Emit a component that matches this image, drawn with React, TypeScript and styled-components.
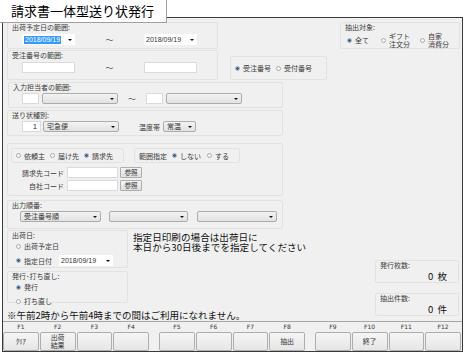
import React from 'react';
import styled, { createGlobalStyle } from 'styled-components';

const GlobalStyle = createGlobalStyle`
  html, body { margin: 0; padding: 0; background: #fff; }
  body { font-family: "Noto Sans CJK JP", "Liberation Sans", sans-serif; color: #333; }
  * { box-sizing: border-box; }
`;

const Screen = styled.div`
  width: 465px;
  height: 354px;
  display: flex;
  flex-direction: column;
  overflow: hidden;
`;

const TitleTab = styled.div`
  position: relative;
  z-index: 1;
  width: 167px;
  height: 23px;
  background: #fff;
  border-right: 1px solid #a0a0a0;
  border-bottom: 1px solid #a0a0a0;
  font-size: 13px;
  line-height: 21px;
  padding-left: 11px;
  color: #000;
`;

const Frame = styled.div`
  margin: -6px 0 0 2px;
  width: 461px;
  height: 335px;
  border: 1px solid #3a3a3a;
  background: #f0f0f0;
  display: flex;
  flex-direction: column;
`;

const Main = styled.div`
  flex: 1;
  display: flex;
  flex-direction: column;
  padding: 4px 0 0 4px;
`;

const Row = styled.div<{ $top?: number }>`
  display: flex;
  align-items: flex-start;
  margin-top: ${p => p.$top ?? 0}px;
`;

const Group = styled.div<{ $w: number; $h: number; $ml?: number; $mt?: number }>`
  width: ${p => p.$w}px;
  height: ${p => p.$h}px;
  margin-left: ${p => p.$ml ?? 0}px;
  margin-top: ${p => p.$mt ?? 0}px;
  border: 1px solid #e2e2e2;
  border-radius: 2px;
  display: flex;
  flex-direction: column;
  flex-shrink: 0;
`;

const Caption = styled.div`
  font-size: 7px;
  line-height: 8px;
  padding-left: 4px;
  color: #3a3a3a;
  white-space: nowrap;
`;

const Fields = styled.div<{ $top?: number; $left?: number }>`
  display: flex;
  align-items: center;
  margin-top: ${p => p.$top ?? 0}px;
  padding-left: ${p => p.$left ?? 0}px;
`;

const Tilde = styled.div<{ $w: number }>`
  width: ${p => p.$w}px;
  text-align: center;
  font-size: 8px;
  color: #555;
`;

const TextBox = styled.div<{ $w: number; $ml?: number; $align?: string }>`
  width: ${p => p.$w}px;
  height: 11px;
  margin-left: ${p => p.$ml ?? 0}px;
  background: #fff;
  border: 1px solid #dadada;
  font-family: "Liberation Sans", sans-serif;
  font-size: 7px;
  line-height: 9px;
  text-align: ${p => p.$align ?? 'left'};
  padding: 0 3px;
  color: #222;
  flex-shrink: 0;
`;

const Arrow = styled.span`
  width: 0;
  height: 0;
  border-left: 2px solid transparent;
  border-right: 2px solid transparent;
  border-top: 2px solid #111;
  margin-left: auto;
  flex-shrink: 0;
`;

const DateCombo = styled.div<{ $w: number; $ml?: number }>`
  width: ${p => p.$w}px;
  height: 11px;
  margin-left: ${p => p.$ml ?? 0}px;
  background: #fff;
  display: flex;
  align-items: center;
  padding: 0 3px 0 2px;
  font-family: "Liberation Sans", sans-serif;
  font-size: 7px;
  color: #333;
  flex-shrink: 0;
`;

const Selected = styled.span`
  background: #3399ff;
  color: #fff;
  padding: 0 1px;
  line-height: 8px;
`;

const Combo = styled.div<{ $w: number; $ml?: number }>`
  width: ${p => p.$w}px;
  height: 11px;
  margin-left: ${p => p.$ml ?? 0}px;
  border: 1px solid #acacac;
  border-radius: 2px;
  background: linear-gradient(#f3f3f3, #e2e2e2);
  display: flex;
  align-items: center;
  padding: 0 3px 0 3px;
  font-size: 7px;
  line-height: 9px;
  color: #333;
  flex-shrink: 0;
`;

const RefButton = styled.div`
  width: 22px;
  height: 11px;
  margin-left: 2px;
  border: 1px solid #adadad;
  border-radius: 1px;
  background: linear-gradient(#f4f4f4, #e0e0e0);
  font-size: 6.5px;
  line-height: 9px;
  text-align: center;
  color: #333;
`;

const FieldLabel = styled.div<{ $w?: number; $ml?: number }>`
  width: ${p => (p.$w ? `${p.$w}px` : 'auto')};
  margin-left: ${p => p.$ml ?? 0}px;
  text-align: right;
  font-size: 7px;
  line-height: 8px;
  color: #3a3a3a;
  white-space: nowrap;
  flex-shrink: 0;
`;

const RadioItem = styled.div<{ $ml?: number }>`
  display: flex;
  align-items: center;
  margin-left: ${p => p.$ml ?? 0}px;
  font-size: 7px;
  line-height: 8px;
  color: #3a3a3a;
  white-space: nowrap;
`;

const RadioText = styled.span`
  display: flex;
  flex-direction: column;
`;

const Dot = styled.span<{ $on?: boolean }>`
  width: 5px;
  height: 5px;
  border-radius: 50%;
  border: 1px solid #a9a9a9;
  margin-right: 3px;
  flex-shrink: 0;
  background: ${p =>
    p.$on ? 'radial-gradient(circle, #2461b3 0 1.2px, #bcd6f0 1.6px)' : '#fbfbfb'};
`;

const Radio = ({ on, lines, ml }: { on?: boolean; lines: string[]; ml?: number }) => (
  <RadioItem $ml={ml}>
    <Dot $on={on} />
    <RadioText>
      {lines.map(l => (
        <span key={l}>{l}</span>
      ))}
    </RadioText>
  </RadioItem>
);

const InnerBox = styled.div<{ $w: number; $h?: number; $ml?: number; $mt?: number }>`
  width: ${p => p.$w}px;
  height: ${p => p.$h ?? 15}px;
  margin-left: ${p => p.$ml ?? 0}px;
  margin-top: ${p => p.$mt ?? 0}px;
  border: 1px solid #e2e2e2;
  border-radius: 2px;
  display: flex;
  align-items: center;
  padding-left: 4px;
  flex-shrink: 0;
`;

const Bottom = styled.div`
  display: flex;
  margin-top: 1px;
`;

const LeftColumn = styled.div`
  display: flex;
  flex-direction: column;
`;

const Notice = styled.div`
  margin: 3px 0 0 5px;
  font-size: 9.6px;
  line-height: 9.8px;
  color: #111;
  white-space: nowrap;
`;

const WarnLine = styled.div`
  margin: 7px 0 0 0;
  font-size: 9.5px;
  line-height: 10px;
  color: #111;
  white-space: nowrap;
`;

const CountColumn = styled.div`
  display: flex;
  flex-direction: column;
  margin-left: auto;
  margin-right: 3px;
  padding-top: 30px;
`;

const CountBox = styled.div<{ $top?: number }>`
  width: 84px;
  height: 23px;
  margin-top: ${p => p.$top ?? 0}px;
  border: 1px solid #e2e2e2;
  border-radius: 2px;
  display: flex;
  flex-direction: column;
`;

const CountValue = styled.div`
  text-align: right;
  padding-right: 11px;
  font-size: 9.5px;
  line-height: 11px;
  color: #111;
  margin-top: 2px;
  word-spacing: 2px;
`;

const KeyBar = styled.div`
  height: 30px;
  border-top: 1px solid #a6a6a6;
  display: flex;
  gap: 10px;
  padding-top: 1px;
`;

const KeyGroup = styled.div`
  width: 146px;
  display: flex;
  gap: 1px;
`;

const KeyCell = styled.div`
  flex: 1;
  display: flex;
  flex-direction: column;
  align-items: stretch;
`;

const KeyName = styled.div`
  height: 9px;
  text-align: center;
  font-family: "DejaVu Sans", sans-serif;
  font-size: 6px;
  line-height: 8px;
  color: #333;
`;

const KeyButton = styled.div`
  height: 19px;
  border: 1px solid #adadad;
  border-radius: 2px;
  background: linear-gradient(#f5f5f5, #e6e6e6);
  display: flex;
  flex-direction: column;
  align-items: center;
  justify-content: center;
  font-size: 7px;
  line-height: 7.5px;
  color: #333;
`;

const keys: string[][] = [
  ['ｸﾘｱ', '出荷\n結果', '', ''],
  ['', '', '', '抽出'],
  ['', '終了', '', ''],
];

const App = (): React.ReactElement => {
  return (
    <Screen>
      <GlobalStyle />
      <TitleTab>請求書一体型送り状発行</TitleTab>
      <Frame>
        <Main>
          <Row>
            <Group $w={211} $h={27}>
              <Caption>出荷予定日の範囲:</Caption>
              <Fields $top={3} $left={14}>
                <DateCombo $w={53}>
                  <Selected>2018/09/19</Selected>
                  <Arrow />
                </DateCombo>
                <Tilde $w={69}>～</Tilde>
                <DateCombo $w={53}>
                  <span>2018/09/19</span>
                  <Arrow />
                </DateCombo>
              </Fields>
            </Group>
            <Group $w={120} $h={27} $ml={122}>
              <Caption>抽出対象:</Caption>
              <Fields $top={1} $left={6}>
                <Radio on lines={['全て']} />
                <Radio ml={12} lines={['ギフト', '注文分']} />
                <Radio ml={10} lines={['自家', '消費分']} />
              </Fields>
            </Group>
          </Row>

          <Row $top={1}>
            <Group $w={211} $h={30}>
              <Caption>受注番号の範囲:</Caption>
              <Fields $top={3} $left={14}>
                <TextBox $w={53} />
                <Tilde $w={69}>～</Tilde>
                <TextBox $w={53} />
              </Fields>
            </Group>
            <InnerBox $w={97} $h={24} $ml={12} $mt={6}>
              <Radio on lines={['受注番号']} />
              <Radio ml={5} lines={['受付番号']} />
            </InnerBox>
          </Row>

          <Row $top={2}>
            <Group $w={275} $h={26} $ml={1}>
              <Caption>入力担当者の範囲:</Caption>
              <Fields $top={2} $left={13}>
                <TextBox $w={17} />
                <Combo $w={76} $ml={3}>
                  <Arrow />
                </Combo>
                <Tilde $w={28}>～</Tilde>
                <TextBox $w={17} />
                <Combo $w={76} $ml={3}>
                  <Arrow />
                </Combo>
              </Fields>
            </Group>
          </Row>

          <Row $top={2}>
            <Group $w={276} $h={26}>
              <Caption>送り状種別:</Caption>
              <Fields $top={2} $left={14}>
                <TextBox $w={19} $align="right">1</TextBox>
                <Combo $w={76} $ml={2}>
                  <span>宅急便</span>
                  <Arrow />
                </Combo>
                <FieldLabel $ml={20}>温度帯</FieldLabel>
                <Combo $w={33} $ml={3}>
                  <span>常温</span>
                  <Arrow />
                </Combo>
              </Fields>
            </Group>
          </Row>

          <Row $top={7}>
            <Group $w={276} $h={53}>
              <Fields $top={4} $left={3}>
                <InnerBox $w={113}>
                  <Radio lines={['依頼主']} />
                  <Radio ml={5} lines={['届け先']} />
                  <Radio ml={5} on lines={['請求先']} />
                </InnerBox>
                <InnerBox $w={106} $ml={10}>
                  <FieldLabel>範囲指定</FieldLabel>
                  <Radio ml={5} on lines={['しない']} />
                  <Radio ml={6} lines={['する']} />
                </InnerBox>
              </Fields>
              <Fields $top={4}>
                <FieldLabel $w={56}>請求先コード</FieldLabel>
                <TextBox $w={51} $ml={3} />
                <RefButton>参照</RefButton>
              </Fields>
              <Fields $top={2}>
                <FieldLabel $w={56}>自社コード</FieldLabel>
                <TextBox $w={51} $ml={3} />
                <RefButton>参照</RefButton>
              </Fields>
            </Group>
          </Row>

          <Row $top={4}>
            <Group $w={276} $h={29}>
              <Caption>出力順番:</Caption>
              <Fields $top={2} $left={12}>
                <Combo $w={81}>
                  <span>受注番号順</span>
                  <Arrow />
                </Combo>
                <Combo $w={79} $ml={8}>
                  <Arrow />
                </Combo>
                <Combo $w={80} $ml={9}>
                  <Arrow />
                </Combo>
              </Fields>
            </Group>
          </Row>

          <Bottom>
            <LeftColumn>
              <Row>
                <LeftColumn>
                  <Group $w={121} $h={38}>
                    <Caption>出荷日:</Caption>
                    <Fields $top={3} $left={8}>
                      <Radio lines={['出荷予定日']} />
                    </Fields>
                    <Fields $top={5} $left={8}>
                      <Radio on lines={['指定日付']} />
                      <DateCombo $w={54} $ml={7}>
                        <span>2018/09/19</span>
                        <Arrow />
                      </DateCombo>
                    </Fields>
                  </Group>
                  <Group $w={121} $h={32} $mt={3}>
                    <Caption>発行･打ち直し:</Caption>
                    <Fields $top={3} $left={8}>
                      <Radio on lines={['発行']} />
                    </Fields>
                    <Fields $top={6} $left={8}>
                      <Radio lines={['打ち直し']} />
                    </Fields>
                  </Group>
                </LeftColumn>
                <Notice>
                  <div>指定日印刷の場合は出荷日に</div>
                  <div>本日から30日後までを指定してください</div>
                </Notice>
              </Row>
              <WarnLine>※午前2時から午前4時までの間はご利用になれません。</WarnLine>
            </LeftColumn>
            <CountColumn>
              <CountBox>
                <Caption>発行枚数:</Caption>
                <CountValue>0 枚</CountValue>
              </CountBox>
              <CountBox $top={10}>
                <Caption>抽出件数:</Caption>
                <CountValue>0 件</CountValue>
              </CountBox>
            </CountColumn>
          </Bottom>
        </Main>

        <KeyBar>
          {keys.map((group, gi) => (
            <KeyGroup key={gi}>
              {group.map((label, ki) => {
                const n = gi * 4 + ki + 1;
                return (
                  <KeyCell key={n}>
                    <KeyName>F{n}</KeyName>
                    <KeyButton>
                      {label.split('\n').map((line, li) => (
                        <span key={li}>{line}</span>
                      ))}
                    </KeyButton>
                  </KeyCell>
                );
              })}
            </KeyGroup>
          ))}
        </KeyBar>
      </Frame>
    </Screen>
  );
};

export default App;
